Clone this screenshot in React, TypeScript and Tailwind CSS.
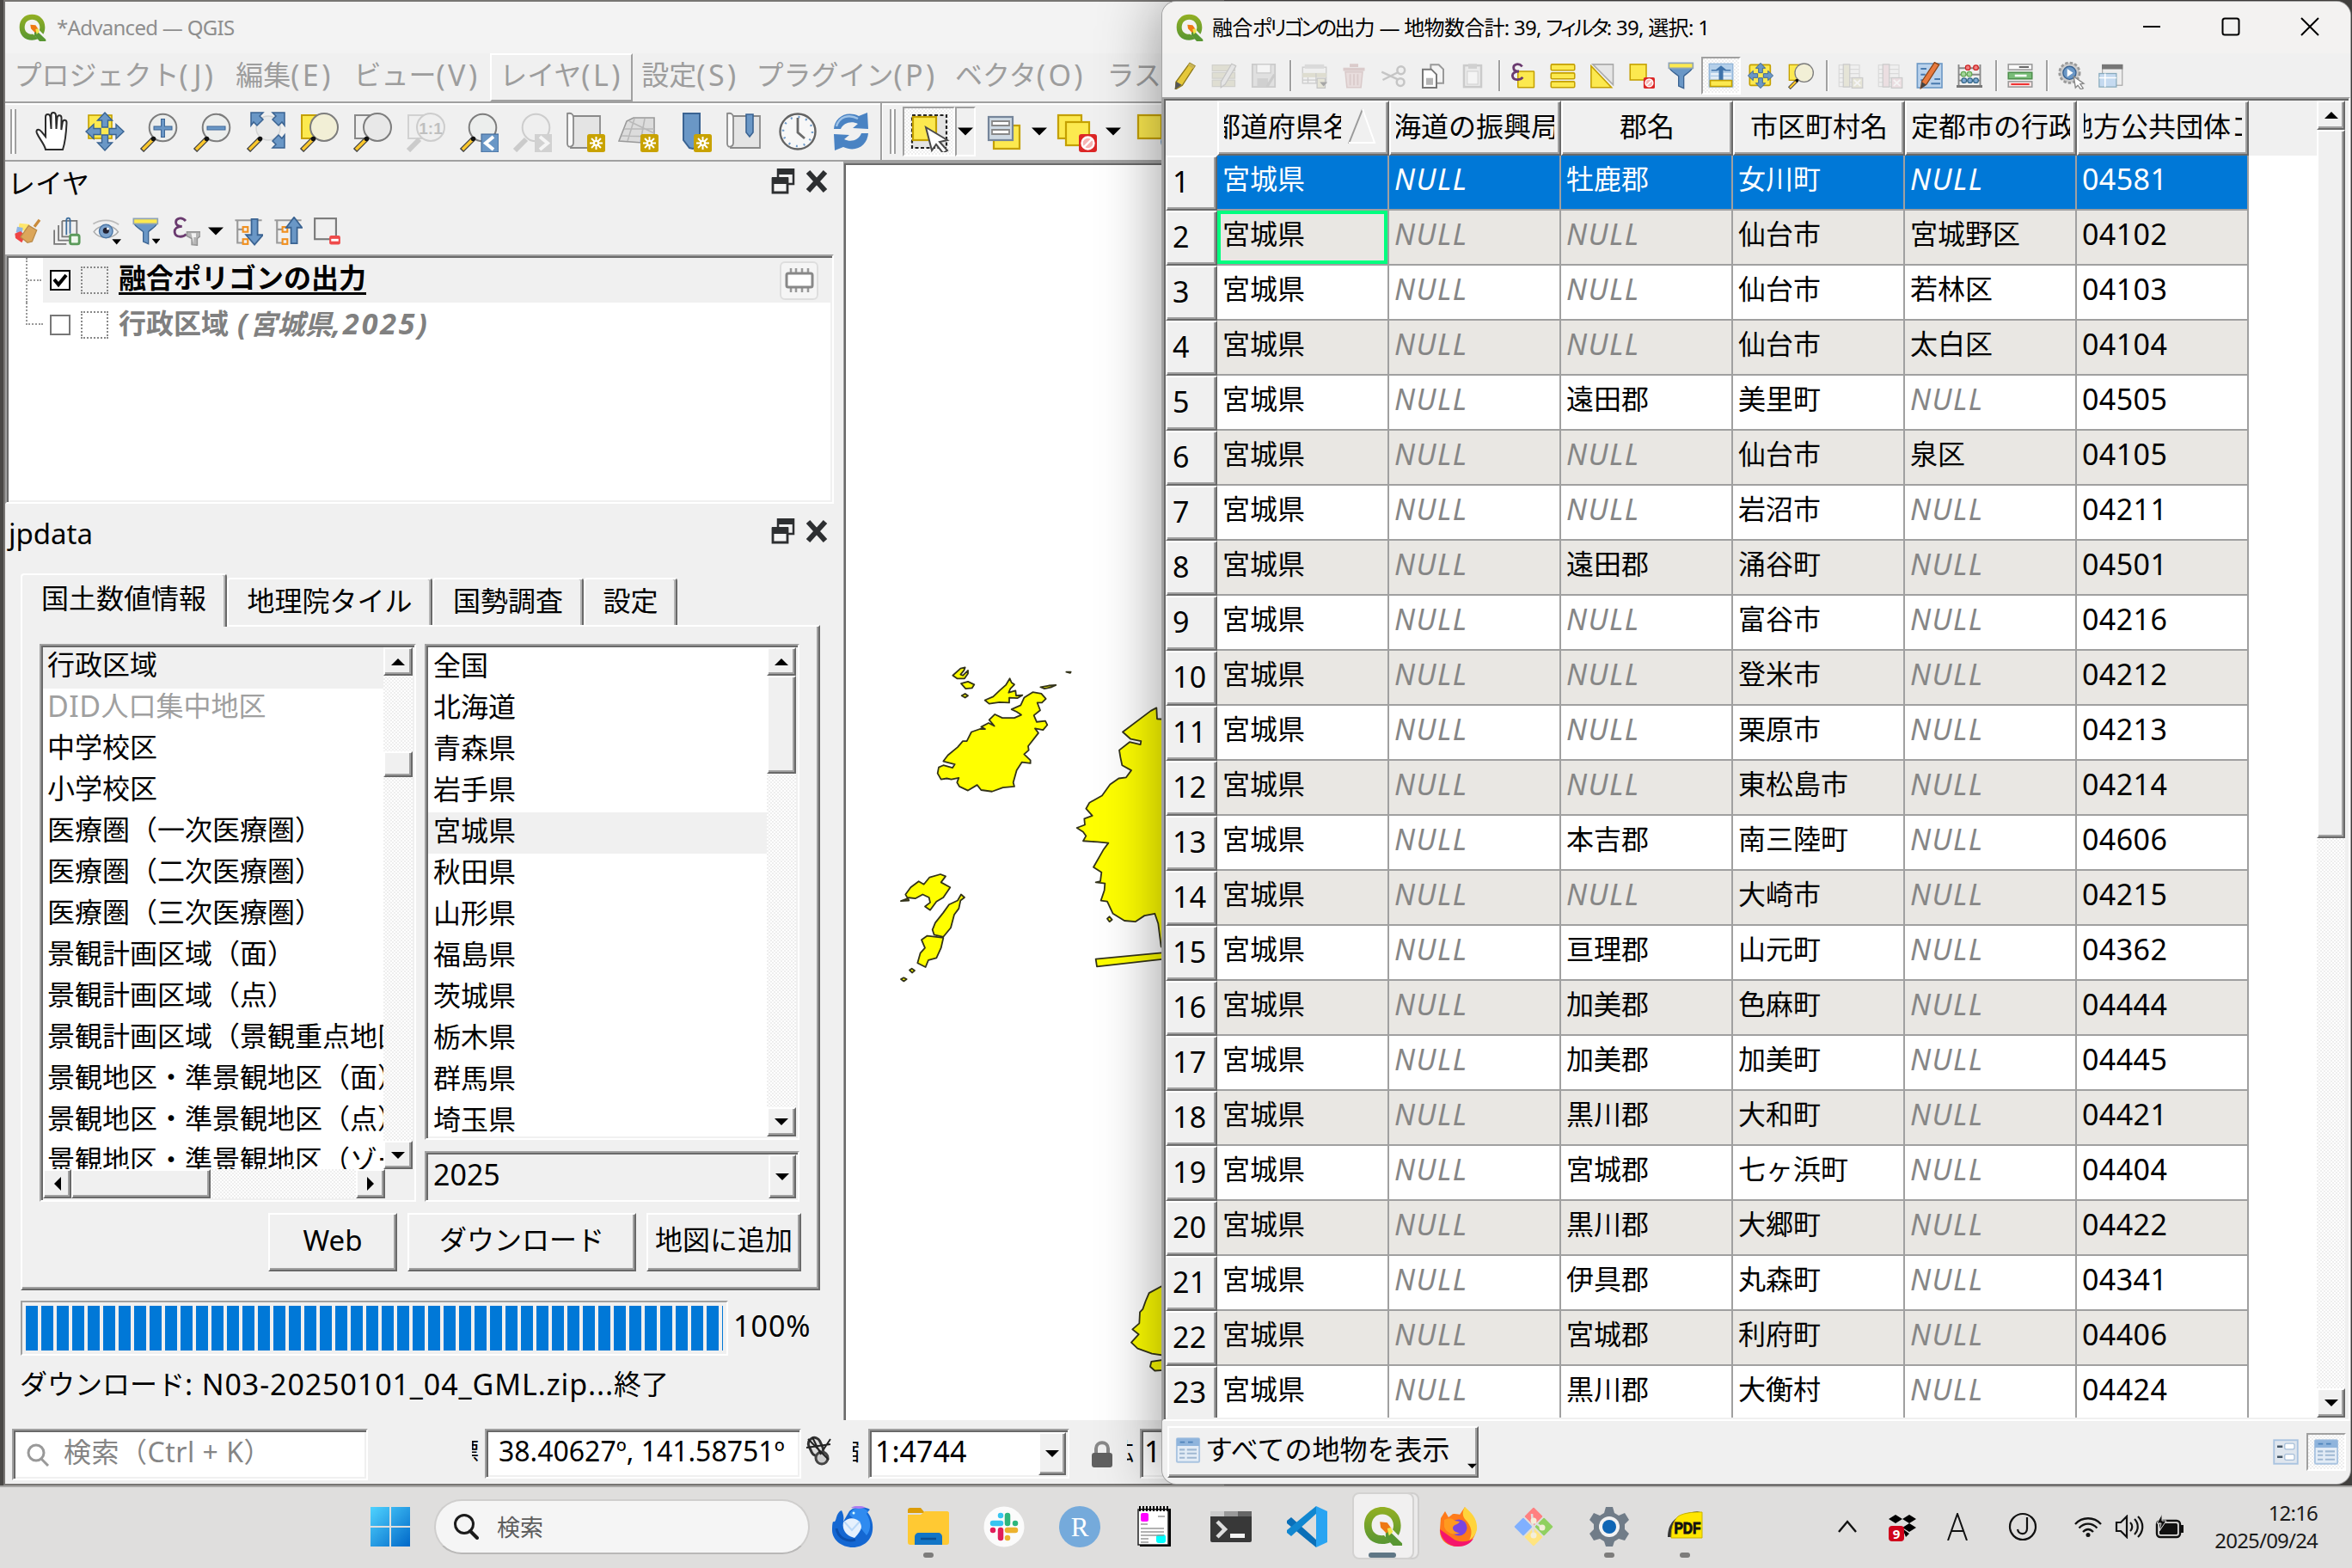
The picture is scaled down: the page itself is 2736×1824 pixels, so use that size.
import React from "react";

type Kids = { children?: React.ReactNode };

const RAISED =
  "border-2 border-t-white border-l-white border-r-[#696969] border-b-[#696969] bg-[#f0f0f0] shadow-[inset_-2px_-2px_0_#a0a0a0]";
const SUNKEN =
  "border-2 border-t-[#a0a0a0] border-l-[#a0a0a0] border-r-white border-b-white shadow-[inset_2px_2px_0_#696969,inset_-2px_-2px_0_#f0f0f0]";
const CHECKER =
  "bg-[repeating-conic-gradient(#ffffff_0_25%,#eeeeee_0_50%)] bg-[length:4px_4px]";

/* ---------- icon primitives ---------- */

function Icon({ size = 48, box = 48, className = "", children }: Kids & { size?: number; box?: number; className?: string }) {
  return (
    <svg width={size} height={size} viewBox={`0 0 ${box} ${box}`} fill="none" className={`shrink-0 ${className}`}>
      {children}
    </svg>
  );
}

const Handle = () => (
  <>
    <path d="M18 33L5 46" stroke="#444" strokeWidth="6" />
    <path d="M17 34L6 45" stroke="#fcc82c" strokeWidth="3.4" />
    <circle cx="18.5" cy="32.5" r="2.8" fill="#111" />
  </>
);
const Lens = ({ fill = "#eceeed" }: { fill?: string }) => (
  <circle cx="29.5" cy="19.5" r="15.8" fill={fill} stroke="#7d7d7d" strokeWidth="2" />
);
const Badge = () => (
  <>
    <rect x="27" y="27" width="21" height="21" rx="2.5" fill="#c8a200" />
    <path d="M37.5 30v15M30 37.5h15M32 32l11 11M43 32L32 43" stroke="#fff" strokeWidth="2" />
    <circle cx="37.5" cy="37.5" r="3.6" fill="#fff" />
    <circle cx="37.5" cy="37.5" r="1.4" fill="#c8a200" />
  </>
);
const NoBadge = () => (
  <>
    <rect x="27" y="27" width="21" height="21" rx="3" fill="#dc2626" />
    <circle cx="37.5" cy="37.5" r="7" fill="#f6b3b3" stroke="#fff" strokeWidth="2.4" />
    <path d="M33 42l9-9" stroke="#fff" strokeWidth="2.4" />
  </>
);
const Y = "#fce94f";
const YS = "#c4a000";
const B = "#6a97c6";
const BS = "#3a6392";

const PanArrows = () => (
  <g fill={B} stroke={BS} strokeWidth="1.4">
    <path d="M24 2l8.500 9h-5v8h-7v-8h-5z" />
    <path d="M24 46l8.500-9h-5v-9h-7v9h-5z" />
    <path d="M2 24l9-8.500v5h8v7h-8v5z" />
    <path d="M46 24l-9-8.500v5h-8v7h8v5z" />
  </g>
);

const HandIcon = () => (
  <Icon>
    <path
      d="M16 45c-1-6-7-12-10-19-2-4 2-6 5-2l5 6V7c0-4 5-4 5.500 0l1 14V5c0-4 5-4 5.500 0l.5 16 1-13c.5-4 5-3.500 5 0l-.2 14 1.500-9c.7-3.500 5-3 4.700 1-.5 11-1.500 22-4.500 31z"
      fill="#fff" stroke="#2b2b2b" strokeWidth="2" transform="translate(1 0)"
    />
  </Icon>
);
const PanSel = ({ size = 48 }: { size?: number }) => (
  <Icon size={size}>
    <rect x="5" y="5" width="27" height="27" fill={Y} stroke={YS} strokeWidth="1.600" />
    <PanArrows />
  </Icon>
);
const PanRows = () => (
  <Icon size={32}>
    <rect x="5" y="5" width="36" height="36" rx="2" fill={Y} stroke={YS} strokeWidth="2.500" />
    <PanArrows />
  </Icon>
);
const ZoomIn = () => (
  <Icon><Lens /><Handle /><path d="M29.500 9v22M18.500 20h22" stroke={BS} strokeWidth="5" /><path d="M29.500 10v20M19.500 20h20" stroke={B} strokeWidth="3.200" /></Icon>
);
const ZoomOut = () => (
  <Icon><Lens /><Handle /><path d="M18.500 20h22" stroke={BS} strokeWidth="5" /><path d="M19.500 20h20" stroke={B} strokeWidth="3.200" /></Icon>
);
const ZoomFull = () => (
  <Icon>
    <circle cx="28" cy="20" r="14" fill="#e9eaea" stroke="#d2d4d4" strokeWidth="1.500" />
    <g fill={B} stroke={BS} strokeWidth="1.500">
      <path d="M8 2h14l-4 4 4 4-7 7-4-4-3 4z" /><path d="M47 2H33l4 4-4 4 7 7 4-4 3 4z" /><path d="M47 43H33l4-4-4-4 7-7 4 4 3-4z" />
    </g>
    <Handle />
  </Icon>
);
const ZoomSel = ({ size = 48 }: { size?: number }) => (
  <Icon size={size}>
    <rect x="5" y="5" width="22" height="27" fill={Y} stroke={YS} strokeWidth="2" />
    <circle cx="31" cy="19" r="16" fill="#f2efd6" stroke="#7d7d7d" strokeWidth="2" /><Handle />
  </Icon>
);
const ZoomLayer = () => (
  <Icon><rect x="5" y="5" width="22" height="27" fill="#eee" stroke="#888" strokeWidth="2" /><circle cx="31" cy="19" r="16" fill="#e8e8e8" stroke="#7d7d7d" strokeWidth="2" /><Handle /></Icon>
);
const ZoomNative = () => (
  <Icon className="opacity-35">
    <rect x="5" y="5" width="22" height="27" fill="#eee" stroke="#999" strokeWidth="2" /><circle cx="31" cy="19" r="16" fill="#eee" stroke="#8d8d8d" strokeWidth="2" />
    <path d="M18 33L5 46" stroke="#888" strokeWidth="6" />
    <text x="31" y="27" textAnchor="middle" fontFamily="Liberation Sans" fontWeight="700" fontSize="19" fill="#666">1:1</text>
  </Icon>
);
const ZoomLast = () => (
  <Icon><Lens /><Handle /><rect x="28" y="27" width="20" height="21" fill={B} stroke={BS} /><path d="M42 30l-9 7.500 9 7.500" stroke="#fff" strokeWidth="4" /></Icon>
);
const ZoomNext = () => (
  <Icon className="opacity-35"><circle cx="29.500" cy="19.500" r="15.800" fill="#eee" stroke="#8d8d8d" strokeWidth="2" /><path d="M18 33L5 46" stroke="#888" strokeWidth="6" /><rect x="28" y="27" width="20" height="21" fill="#999" /><path d="M34 30l9 7.500-9 7.500" stroke="#fff" strokeWidth="4" /></Icon>
);
const MapSheet = ({ children }: Kids) => (
  <Icon>
    <path d="M10 6h32v37H8z" fill="#e4e4e4" stroke="#8a8a8a" strokeWidth="1.800" />
    <path d="M4 3c5-1 7 1 7 5v29c0 5-7 7-7 1z" fill="#fafafa" stroke="#8a8a8a" strokeWidth="1.800" />
    {children}
  </Icon>
);
const View3D = () => (
  <Icon>
    <path d="M11 12l8-4h24v30L2 35z" fill="#dcdcdc" stroke="#999" strokeWidth="1.600" />
    <path d="M8 21h35M5 29l38 1M20 9l-8 26M32 9l-5 27M14 12l29 14" stroke="#b9b9b9" strokeWidth="1.600" /><Badge />
  </Icon>
);
const Bookmark = () => (
  <Icon><path d="M15 3h19v38l-8 3-4-1-7-9z" fill={B} stroke={BS} strokeWidth="2" /><Badge /></Icon>
);
const ShowBookmark = () => (
  <MapSheet><path d="M26 4h8v21l-4 5-4-5z" fill={B} stroke={BS} strokeWidth="1.600" /></MapSheet>
);
const Clock = () => (
  <Icon>
    <circle cx="24" cy="24" r="20.500" fill="#f7f7f7" stroke="#636363" strokeWidth="2.400" />
    <circle cx="24" cy="24" r="17" stroke="#6f9ccc" strokeWidth="2.500" strokeDasharray="2 6.900" />
    <path d="M24 8v17l8 7" stroke="#6b6b6b" strokeWidth="2.800" />
  </Icon>
);
const Refresh = () => (
  <Icon>
    <path d="M4 21C5 8 18-1 33 6l10-4 1 19-18-1 6-5c-8-4-17-1-20 6z" fill="#4a83c3" />
    <path d="M44 26C43 40 30 49 15 42l-10 4-1-19 18 1-6 5c8 4 17 1 20-7z" fill="#4a83c3" />
    <path d="M7 18C10 7 21 3 32 9" stroke="#9fc3e8" strokeWidth="2.500" />
  </Icon>
);
const SelectIcon = () => (
  <Icon>
    <rect x="4" y="5" width="40" height="38" fill="#e4e4e4" stroke="#222" strokeWidth="2.200" strokeDasharray="4 2.500" />
    <rect x="5" y="7" width="27" height="27" fill={Y} stroke={YS} strokeWidth="2.200" />
    <path d="M20 19l25 15-9 2 9 10-5 3-8-10-5 7z" fill="#fff" stroke="#4a4a4a" strokeWidth="2" />
  </Icon>
);
const FormSel = () => (
  <Icon>
    <rect x="12" y="17" width="30" height="27" fill={Y} stroke={YS} strokeWidth="2.200" /><rect x="6" y="7" width="28" height="27" fill="#cdd8e2" stroke="#75859a" strokeWidth="2.200" />
    <path d="M10 12h20v5H10zM10 22h20v5H10z" fill="#fff" stroke="#888" strokeWidth="1.800" />
  </Icon>
);
const Deselect = () => (
  <Icon><rect x="3" y="5" width="27" height="27" fill={Y} stroke={YS} strokeWidth="2.200" /><rect x="12" y="13" width="27" height="27" fill={Y} stroke={YS} strokeWidth="2.200" /><NoBadge /></Icon>
);
const QLogo = ({ size }: { size: number }) => (
  <Icon size={size}>
    <defs><linearGradient id="qg" x1="0" y1="0" x2="0" y2="1"><stop offset="0" stopColor="#93b023" /><stop offset="1" stopColor="#589632" /></linearGradient></defs>
    <path d="M23 1C10 1 1 10 1 23.500S10 46 23 46c4 0 7-.8 10-2.200l-8-8.200c-9 1-15-4-15-12S15 10 23 10s13.500 6 13.500 13.500c0 2-.3 3.500-1 5l7 7c2-3.500 3-7.500 3-12C45.500 10 36 1 23 1z" fill="url(#qg)" />
    <path d="M27 26l20 19v3H36L27 38z" fill="#589632" />
    <path d="M20 19l9 1 5 7-6 6-7-7z" fill="#ee7913" />
    <path d="M29 27l4-1 3 5-5 5z" fill="#f0e64a" />
  </Icon>
);

/* ---------- small toolbar icons ---------- */

const Faded = ({ children }: Kids) => <Icon size={30} className="opacity-30">{children}</Icon>;
const Pencil = () => (
  <Icon size={32}><path d="M33 2l9 5-22 34-12 7 1-13z" fill="#e5c83a" stroke="#8f7a1a" strokeWidth="2" /><path d="M33 2l9 5-3 5-9-6z" fill="#c9b458" /><path d="M9 34l10 6-12 8z" fill="#555" /></Icon>
);
const EditAll = () => (
  <Faded><path d="M2 4h42v11H2zM2 18h42v11H2zM2 32h42v12H2z" fill="#bbb78f" stroke="#8b8b7b" strokeWidth="2" /><path d="M38 2l8 4-20 34-8 6V36z" fill="#ccc" stroke="#666" strokeWidth="2" /></Faded>
);
const Save = () => (
  <Faded><path d="M3 3h42v42H3z" fill="#bdbdbd" stroke="#777" strokeWidth="3" /><path d="M11 3h26v16H11z" fill="#fff" stroke="#777" strokeWidth="2" /><path d="M12 29h20v16H12z" fill="#888" /><path d="M44 22L30 45" stroke="#777" strokeWidth="5" /></Faded>
);
const AddRow = () => (
  <Faded><path d="M2 8h44v30H2z" fill="#eee" stroke="#777" strokeWidth="2" /><path d="M6 3h36v8H6z" fill="#aaa" /><path d="M2 19h44v8H2z" fill="#b8b48a" /><path d="M12 27v11M27 19v19M2 32h44" stroke="#777" strokeWidth="2" /><rect x="29" y="29" width="15" height="18" fill="#cfcba0" stroke="#666" strokeWidth="2" /><path d="M34 36h14l-7 8z" fill="#000" /></Faded>
);
const Trash = () => (
  <Faded><path d="M4 12h40M16 5h16" stroke="#a77" strokeWidth="6" /><path d="M8 17h32l-3 29H11z" fill="#d9b3b3" stroke="#a77" strokeWidth="2.500" /><path d="M17 21v21M24 21v21M31 21v21" stroke="#a77" strokeWidth="3" /></Faded>
);
const Cut = () => (
  <Faded><circle cx="38" cy="14" r="7" stroke="#666" strokeWidth="4" /><circle cx="37" cy="36" r="7" stroke="#666" strokeWidth="4" /><path d="M2 17l30 14M4 32l28-14" stroke="#666" strokeWidth="4" /></Faded>
);
const Copy = () => (
  <Icon size={32}><path d="M20 5h14l8 8v24H20z" fill="#f4f4f4" stroke="#999" strokeWidth="3" /><path d="M6 13h15l9 9v23H6z" fill="#fff" stroke="#777" strokeWidth="3" /><path d="M12 28h12v12H12z" fill="#b5b5b5" /></Icon>
);
const Paste = () => (
  <Faded><rect x="8" y="5" width="32" height="40" fill="#ddd" stroke="#777" strokeWidth="4" /><rect x="14" y="16" width="20" height="24" fill="#fff" stroke="#999" strokeWidth="2" /><rect x="16" y="2" width="16" height="9" fill="#888" /></Faded>
);
const SelExpr = () => (
  <Icon size={30}><rect x="14" y="16" width="30" height="30" rx="1" fill={Y} stroke={YS} strokeWidth="2.500" /><path d="M22 7C16 0 5 2 6 10c0 5 5 6 10 6C8 16 3 20 4 25c1 8 14 8 19 2" stroke="#6a3a6f" strokeWidth="4.500" /></Icon>
);
const SelAll = () => (
  <Icon size={30}><g fill={Y} stroke={YS} strokeWidth="2.500"><rect x="2" y="3" width="44" height="11" rx="2" /><rect x="2" y="19" width="44" height="11" rx="2" /><rect x="2" y="35" width="44" height="11" rx="2" /></g></Icon>
);
const Invert = () => (
  <Icon size={30}><path d="M6 3h38v38z" fill="#e6e6e6" stroke="#aaa" strokeWidth="2.500" /><path d="M3 6v40h38z" fill={Y} stroke={YS} strokeWidth="2.500" /></Icon>
);
const DeselSmall = () => (
  <Icon size={30}><rect x="2" y="3" width="30" height="29" fill={Y} stroke={YS} strokeWidth="2.500" /><NoBadge /></Icon>
);
const Funnel = ({ drop }: { drop?: boolean }) => (
  <Icon size={32}>
    <path d="M3 10h40c-2 7-12 11-15 15v21l-9-4V25C16 21 5 17 3 10z" fill={B} stroke={BS} strokeWidth="2" />
    <path d="M2 2h42v9H2z" fill={Y} stroke="#8fa3b5" strokeWidth="2.500" />
    {drop && <path d="M34 37h15l-7.500 9z" fill="#000" />}
  </Icon>
);
const MoveTop = () => (
  <Icon size={30}><rect x="2" y="2" width="44" height="43" fill="#b4cfe9" stroke="#8db2d8" strokeWidth="2" /><path d="M5 21h38M5 28h38" stroke="#e8f0f8" strokeWidth="4" /><path d="M6 14h12M30 14h12" stroke="#4879ad" strokeWidth="2.500" /><path d="M24 5l11 9h-7v18h-8V14h-7z" fill="#3f73ab" /><rect x="4" y="33" width="40" height="11" fill={Y} stroke={YS} strokeWidth="2.500" /></Icon>
);
const NewCol = ({ color }: { color: string }) => (
  <Faded><path d="M2 4h38v40H2zM2 12h38M2 20h38M2 28h38M2 36h38" fill="#eee" stroke="#aaa" strokeWidth="2" /><rect x="10" y="3" width="12" height="42" fill={color} stroke="#777" strokeWidth="2" /><rect x="26" y="28" width="20" height="19" fill={color} stroke="#777" strokeWidth="2" /><path d="M30 32l12 11M42 32L30 43" stroke="#fff" strokeWidth="3" /></Faded>
);
const OrganizeCols = () => (
  <Icon size={32}><rect x="2" y="3" width="43" height="42" fill="#b9d2ec" stroke="#6f9ac6" strokeWidth="2.500" /><path d="M8 12h10M8 22h8M8 32h6M26 38h16M32 30h10" stroke="#4879ad" strokeWidth="3" /><path d="M32 1l8 4-22 34-10 7 2-12z" fill="#e87a3e" stroke="#8c4518" strokeWidth="2" /><path d="M10 35l8 5-10 6z" fill="#444" /></Icon>
);
const Abacus = () => (
  <Icon size={30}><path d="M4 3v40M44 3v40M4 10h40M4 22h40M4 33h40" stroke="#888" strokeWidth="3" /><path d="M0 44h48" stroke="#777" strokeWidth="5" /><g strokeWidth="2"><g fill="#f08080" stroke="#c22"><circle cx="21" cy="9" r="4.500" /><circle cx="36" cy="9" r="4.500" /></g><g fill="#a5d69b" stroke="#6a5"><circle cx="13" cy="21" r="4.500" /><circle cx="24" cy="21" r="4.500" /></g><g fill="#7fa8d2" stroke="#368"><circle cx="14" cy="33" r="4.500" /><circle cx="25" cy="33" r="4.500" /><circle cx="36" cy="33" r="4.500" /></g></g></Icon>
);
const CondFormat = () => (
  <Icon size={30}><g strokeWidth="2.500"><rect x="2" y="3" width="44" height="10" fill="#fafafa" stroke="#999" /><rect x="2" y="18" width="44" height="12" fill="#79bd78" stroke="#4f8f4e" /><rect x="2" y="35" width="44" height="10" fill="#fde3e3" stroke="#999" /></g><path d="M22 8h18" stroke="#666" strokeWidth="3" /><path d="M14 24h22" stroke="#fff" strokeWidth="4" /><path d="M7 40h34" stroke="#e33" strokeWidth="3" /></Icon>
);
const ActionIcon = () => (
  <Icon size={33}><circle cx="21" cy="20" r="17" fill="#ccc" stroke="#999" strokeWidth="4" strokeDasharray="5 3" /><circle cx="21" cy="20" r="11" fill={B} stroke={BS} strokeWidth="2" /><path d="M17 13l10 7-10 7z" fill="#fff" /><path d="M28 26l17 12-6 1 5 7-4 2-5-7-4 4z" fill="#fff" stroke="#888" strokeWidth="2" /></Icon>
);
const DockTable = () => (
  <Icon size={30}><rect x="9" y="4" width="37" height="38" fill="#eee" stroke="#aaa" strokeWidth="2" /><rect x="8" y="3" width="39" height="9" fill="#777" /><rect x="3" y="20" width="32" height="25" fill="#c5daf0" stroke="#8ab" strokeWidth="2" /><path d="M3 28h32M14 20v25" stroke="#fff" strokeWidth="2.500" /></Icon>
);
const TableIcon = ({ size = 30 }: { size?: number }) => (
  <Icon size={size}><rect x="3" y="2" width="42" height="44" rx="2" fill="#e3ecf6" stroke="#a9c3e0" strokeWidth="3" /><rect x="3" y="2" width="42" height="14" fill="#8fb4dc" /><path d="M9 9h9M24 9h9" stroke="#4f84bb" strokeWidth="3" /><path d="M8 23h10M22 23h18M8 30h10M22 30h18M8 38h10M22 38h18" stroke="#a0b8d2" strokeWidth="3.500" /></Icon>
);
const FormIcon = () => (
  <Icon size={30}><rect x="2" y="2" width="44" height="44" fill="#dfe6ee" stroke="#a9c3e0" strokeWidth="3" /><path d="M8 14h10M8 33h10" stroke="#456" strokeWidth="4" /><rect x="22" y="8" width="18" height="11" rx="3" fill="#fff" stroke="#a5bdd8" strokeWidth="2" /><rect x="22" y="28" width="18" height="11" rx="3" fill="#fff" stroke="#a5bdd8" strokeWidth="2" /></Icon>
);

/* ---------- layer panel icons ---------- */

const Style = () => (
  <Icon size={32}><path d="M10 10l18 2-8 12L8 20z" fill="#ffe66b" /><path d="M6 16l10 2-2 12-10-4z" fill="#8fb4e4" /><path d="M2 28l10-4 8 8-6 12L3 36z" fill="#ef4444" /><path d="M45 4L36 16" stroke="#c98a3a" strokeWidth="5" /><path d="M26 14l14 8-8 20-8 2L12 34z" fill="#dca65a" stroke="#b98a4a" strokeWidth="2" /></Icon>
);
const AddGroup = () => (
  <Icon size={34}><path d="M3 22v23h20M10 14v25h18M16 7h24v22" stroke="#777" strokeWidth="2.500" /><path d="M16 7v26h14" stroke="#777" strokeWidth="2.500" /><path d="M23 30V6c0-5 6-5 6 0v22" stroke="#3f6f9d" strokeWidth="2.500" /><rect x="29" y="30" width="15" height="15" rx="3" fill="#eef7ed" stroke="#5a9a5a" strokeWidth="4" /></Icon>
);
const EyeIcon = () => (
  <Icon size={34}><path d="M3 25C11 13 33 11 43 25 34 37 12 38 3 25z" fill="#f1f3f5" stroke="#aaa" strokeWidth="2" /><circle cx="23" cy="24" r="11" fill="#7fa5cf" stroke="#4c77a6" strokeWidth="2" /><circle cx="23" cy="23" r="5" fill="#223" /><circle cx="26" cy="20" r="2" fill="#fff" /><path d="M2 12C14 4 32 4 44 13" stroke="#bbb" strokeWidth="2.500" /><path d="M33 37h15l-7.500 9z" fill="#000" /></Icon>
);
const ExprFilter = () => (
  <Icon size={34}><path d="M24 7C18 0 7 2 8 10c0 5 5 6 10 6C10 16 5 20 6 26c1 9 14 8 19 3" stroke="#6a3a6f" strokeWidth="4" /><path d="M26 25h22v7l-5 4v11l-9-1V36l-8-4z" fill="#b5b5b5" stroke="#929292" strokeWidth="2" /><path d="M33 27h8v7h-4v10" fill="#f2f2f2" /></Icon>
);
const TreeArrow = ({ up }: { up?: boolean }) => (
  <Icon size={34}><path d="M2 6h44M6 6v37h9M6 21h9" stroke="#999" strokeWidth="3" /><rect x="15" y="17" width="8" height="8" stroke="#f09020" strokeWidth="3" /><rect x="15" y="37" width="8" height="8" stroke="#f09020" strokeWidth="3" /><path d={up ? "M34 1l13 17h-8v26H29V18h-8z" : "M34 46l14-16h-9V4H29v26H20z"} fill={B} stroke={BS} strokeWidth="2.500" /></Icon>
);
const RemoveLayer = () => (
  <Icon size={34}><rect x="3" y="3" width="35" height="34" stroke="#7a7a7a" strokeWidth="3" /><rect x="27" y="31" width="18" height="15" rx="3" fill="#ef4a4a" /><path d="M30 38.500h12" stroke="#fff" strokeWidth="4" /></Icon>
);

const Tri = ({ dir = "down", className = "" }: { dir?: "up" | "down" | "left" | "right"; className?: string }) => {
  const d = { down: "M0 4h16L8 12z", up: "M0 12h16L8 4z", left: "M12 0v16L4 8z", right: "M4 0v16l8-8z" }[dir];
  return <svg viewBox="0 0 16 16" className={`shrink-0 ${className}`}><path d={d} fill="#000" /></svg>;
};

const SbBtn = ({ dir, className }: { dir: "up" | "down" | "left" | "right"; className: string }) => (
  <div className={`${RAISED} flex shrink-0 items-center justify-center ${className}`}><Tri dir={dir} className="h-4 w-4" /></div>
);

const DockButtons = () => (
  <div className="flex items-center gap-3 pr-[18px] pb-1">
    <svg width="28" height="30" viewBox="0 0 28 30" fill="none"><path d="M8 1h18v17H8z" stroke="#2d2f31" strokeWidth="2.500" fill="#f0f0f0" /><path d="M7 0h20v7H7z" fill="#2d2f31" /><path d="M2 12h17v16H2z" stroke="#2d2f31" strokeWidth="2.800" fill="#f4f4f4" /><path d="M1 10h19v8H1z" fill="#2d2f31" /></svg>
    <svg width="26" height="28" viewBox="0 0 26 28"><path d="M3 3l20 22M23 3L3 25" stroke="#2d2f31" strokeWidth="6" /></svg>
  </div>
);

/* ---------- main window ---------- */

const menus: [string, string, boolean?][] = [
  ["プロジェクト(J)", "w-[256px]"], ["編集(E)", "w-[138px]"], ["ビュー(V)", "w-[170px]"], ["レイヤ(L)", "w-[166px]", true],
  ["設定(S)", "w-[134px]"], ["プラグイン(P)", "w-[230px]"], ["ベクタ(O)", "w-[174px]"], ["ラスタ(R)", "w-[174px]"],
];

function MenuBar() {
  return (
    <div className="flex h-14 shrink-0 bg-[#f0f0f0] text-[#9d9d9d]">
      {menus.map(([m, w, on]) => (
        <div key={m} className={`${w} flex shrink-0 items-center justify-center border-2 pb-1.5 ${on ? "border-t-white border-l-white border-r-[#a0a0a0] border-b-[#a0a0a0]" : "border-transparent"}`}>
          <span>{m.slice(0, -3)}</span><span className="text-[34px] tracking-[3.4px]">{m.slice(-3)}</span>
        </div>
      ))}
    </div>
  );
}

const Cell = ({ children, w = "w-[62px]" }: Kids & { w?: string }) => (
  <div className={`${w} flex h-full shrink-0 items-center justify-center`}>{children}</div>
);
const Grip = () => <div className="h-[52px] w-[7px] shrink-0 border-x-2 border-[#a0a0a0] bg-white" />;

function MainToolbar() {
  return (
    <div className="flex h-[68px] shrink-0 items-center border-t-2 border-t-[#a0a0a0] bg-[#f0f0f0] pl-1.5 shadow-[inset_0_2px_0_#fff]">
      <Grip />
      <div className="flex h-full items-center pl-[10px]">
        {[HandIcon, PanSel, ZoomIn, ZoomOut, ZoomFull, ZoomSel, ZoomLayer, ZoomNative, ZoomLast, ZoomNext].map((I, i) => (
          <Cell key={i}><I /></Cell>
        ))}
        <Cell><MapSheet><Badge /></MapSheet></Cell>
        <Cell><View3D /></Cell><Cell><Bookmark /></Cell><Cell><ShowBookmark /></Cell><Cell><Clock /></Cell><Cell><Refresh /></Cell>
      </div>
      <div className="ml-[3px] h-full w-[3px] border-l-2 border-[#a0a0a0] bg-white" />
      <div className="w-2" />
      <Grip />
      <div className={`ml-2 flex h-[58px] w-[61px] shrink-0 items-center justify-center border-2 border-t-[#a0a0a0] border-l-[#a0a0a0] border-r-white border-b-white ${CHECKER}`}><SelectIcon /></div>
      <div className="flex h-[58px] w-[24px] shrink-0 items-center justify-center border-2 border-t-[#a0a0a0] border-l-[#a0a0a0] border-r-white border-b-white"><Tri className="h-[18px] w-[18px]" /></div>
      <Cell w="w-[65px]"><FormSel /></Cell><Tri className="h-[18px] w-[18px]" />
      <Cell w="w-[68px]"><Deselect /></Cell><Tri className="h-[18px] w-[18px]" />
      <Cell w="w-[68px]"><Icon><rect x="10" y="5" width="27" height="27" fill={Y} stroke={YS} strokeWidth="2.200" /><circle cx="44" cy="36" r="8" fill={B} /></Icon></Cell>
    </div>
  );
}

function LayerTree() {
  return (
    <div className={`${SUNKEN} mr-[11px] h-[290px] shrink-0 bg-white p-0.5`}>
      <div className="flex h-[52px] items-center">
        <div className="h-full w-[40px] pl-[20px]"><div className="flex h-full items-center border-l-2 border-dotted border-[#999]"><div className="w-4 border-t-2 border-dotted border-[#999]" /></div></div>
        <div className="flex h-full flex-1 items-center bg-[#f0f0f0] pl-2 pr-[14px]">
          <div className="flex h-6 w-6 items-center justify-center border-2 border-black bg-white"><svg width="18" height="18" viewBox="0 0 18 18"><path d="M2 8l5 6 9-11" stroke="#000" strokeWidth="4" fill="none" /></svg></div>
          <div className="ml-3 h-8 w-8 border-2 border-dotted border-[#888]" />
          <span className="ml-[12px] -mt-1 border-b-[3px] border-black pb-0 text-[32px] leading-[34px] font-bold">融合ポリゴンの出力</span>
          <div className="ml-auto flex h-[45px] w-[45px] items-center justify-center rounded-md border-2 border-[#dedede] bg-[#f5f5f5]">
            <svg width="34" height="30" viewBox="0 0 34 30" fill="none"><path d="M7 1v6M13 1v6M20 1v6M27 1v6M7 23v6M13 23v6M20 23v6M27 23v6" stroke="#999" strokeWidth="2.500" /><rect x="2" y="7" width="30" height="16" rx="2" fill="#fff" stroke="#888" strokeWidth="3" /></svg>
          </div>
        </div>
      </div>
      <div className="flex h-[52px] items-center">
        <div className="h-full w-[40px] pl-[20px]"><div className="h-[26px] border-b-2 border-l-2 border-dotted border-[#999]" /></div>
        <div className="ml-2 h-6 w-6 border-2 border-[#777] bg-white" />
        <div className="ml-3 h-8 w-8 border-2 border-dotted border-[#888]" />
        <span className="ml-[12px] pb-1 font-bold text-[#808080]">行政区域</span>
        <span className="ml-[10px] pb-1 font-bold text-[#808080] italic"><span className="text-[34px] tracking-[3px]">(</span>宮城県<span className="text-[34px] tracking-[2.8px]">,2025)</span></span>
      </div>
    </div>
  );
}

const datasets = ["行政区域", "DID人口集中地区", "中学校区", "小学校区", "医療圏（一次医療圏）", "医療圏（二次医療圏）", "医療圏（三次医療圏）", "景観計画区域（面）", "景観計画区域（点）", "景観計画区域（景観重点地区）", "景観地区・準景観地区（面）", "景観地区・準景観地区（点）", "景観地区・準景観地区（ゾーン）"];
const prefs = ["全国", "北海道", "青森県", "岩手県", "宮城県", "秋田県", "山形県", "福島県", "茨城県", "栃木県", "群馬県", "埼玉県"];

function DatasetList() {
  return (
    <div className={`${SUNKEN} flex h-[649px] w-[438px] flex-col bg-white p-0.5`}>
      <div className="flex min-h-0 flex-1">
        <div className="w-[398px] overflow-hidden">
          {datasets.map((d, i) => (
            <div key={d} className={`flex h-12 items-center whitespace-nowrap pb-2 pl-[5px] ${i === 0 ? "bg-[#f0f0f0]" : ""} ${i === 1 ? "text-[#a0a0a0]" : ""}`}>
              {i === 1 ? <><span className="text-[34px] tracking-[0.4px]">DID</span>{d.slice(3)}</> : d}
            </div>
          ))}
        </div>
        <div className={`flex w-[34px] flex-col ${CHECKER}`}>
          <SbBtn dir="up" className="h-[33px]" />
          <div className={`${RAISED} mt-[88px] h-[30px]`} />
          <SbBtn dir="down" className="mt-auto h-[33px]" />
        </div>
      </div>
      <div className="flex h-[34px] bg-[#f0f0f0]">
        <div className={`flex w-[398px] ${CHECKER}`}>
          <SbBtn dir="left" className="w-[33px]" />
          <div className={`${RAISED} w-[162px]`} />
          <SbBtn dir="right" className="ml-auto w-[34px]" />
        </div>
      </div>
    </div>
  );
}

function PrefColumn() {
  return (
    <div className="flex w-[436px] flex-col">
      <div className={`${SUNKEN} flex h-[577px] bg-white p-0.5`}>
        <div className="flex-1 overflow-hidden">
          {prefs.map((p, i) => (
            <div key={p} className={`flex h-12 items-center pb-1.5 pl-[6px] ${i === 4 ? "bg-[#f0f0f0]" : ""}`}>{p}</div>
          ))}
        </div>
        <div className={`flex w-[34px] flex-col ${CHECKER}`}>
          <SbBtn dir="up" className="h-[33px]" />
          <div className={`${RAISED} h-[114px]`} />
          <SbBtn dir="down" className="mt-auto h-[34px]" />
        </div>
      </div>
      <div className={`${SUNKEN} mt-[13px] flex h-[59px] items-center bg-[#f0f0f0] p-0.5 pl-[8px]`}>
        <span className="flex-1 pb-1.5 text-[34px]">2025</span>
        <SbBtn dir="down" className="h-full w-[32px]" />
      </div>
    </div>
  );
}

const Tab = ({ w, on, children }: Kids & { w: string; on?: boolean }) => (
  <div className={`${w} flex items-center justify-center rounded-t-[4px] border-t-2 border-r-2 border-l-2 border-t-white border-r-[#696969] border-l-white bg-[#f0f0f0] ${on ? "relative -mb-0.5 h-[62px] pb-1.5" : "h-[55px] pb-1"} shadow-[inset_-2px_0_0_#b4b4b4]`}>{children}</div>
);

function DataPanel() {
  return (
    <>
      <div className="flex h-[70px] shrink-0 items-center justify-between pb-0.5 pl-1"><span className="text-[33px]">jpdata</span><DockButtons /></div>
      <div className="flex h-[71px] shrink-0 items-end pl-[18px]">
        <Tab w="w-[240px]" on>国土数値情報</Tab><Tab w="w-[239px]">地理院タイル</Tab><Tab w="w-[176px]">国勢調査</Tab><Tab w="w-[109px]">設定</Tab>
      </div>
      <div className="ml-[18px] h-[774px] w-[930px] shrink-0 border-2 border-t-white border-r-[#696969] border-b-[#696969] border-l-white pt-5 pl-[20px] shadow-[inset_-2px_-2px_0_#a0a0a0]">
        <div className="flex gap-[10px]"><DatasetList /><PrefColumn /></div>
        <div className="mt-[13px] flex h-[68px] justify-end gap-3 pr-[20px]">
          <div className={`${RAISED} flex w-[150px] items-center justify-center pb-1.5 text-[33px]`}>Web</div>
          <div className={`${RAISED} flex w-[266px] items-center justify-center pb-1.5`}>ダウンロード</div>
          <div className={`${RAISED} flex w-[180px] items-center justify-center pb-1.5`}>地図に追加</div>
        </div>
      </div>
      <div className="mt-3 ml-[18px] flex h-[64px] shrink-0 items-center">
        <div className="h-full w-[823px] border-2 border-t-[#a0a0a0] border-r-white border-b-white border-l-[#a0a0a0] p-1 py-[4px]">
          <div className="h-full w-full bg-[repeating-linear-gradient(90deg,#0078d7_0_14px,#f0f0f0_14px_18px)]" />
        </div>
        <span className="ml-[6px] pb-1.5 text-[34px] tracking-[1px]">100%</span>
      </div>
      <div className="flex h-[68px] shrink-0 items-center pb-0.5 pl-[17px] whitespace-nowrap">ダウンロード<span className="text-[34px] tracking-[0.9px]">: N03-20250101_04_GML.zip...</span>終了</div>
    </>
  );
}

function MapCanvas() {
  return (
    <div className="flex-1 border-t-2 border-l-2 border-[#696969] bg-white">
      <svg width="370" height="1460" viewBox="0 0 370 1460">
        <g transform="translate(-4 548) scale(0.33333 0.58687)" fill="#ffff00" stroke="#33331a" strokeWidth="1.800" strokeLinejoin="round">
          {[
            "M385 78L412 64 428 62 424 68 412 76 420 78 438 68 438 74 426 84 400 84z",
            "M414 94L438 90 460 96 452 103 430 104z", "M416 118L428 114 438 118 428 122z",
            "M497 127L526 120 548 108 570 97 584 84 590 92 600 96 586 104 580 112 604 108 606 118 628 117 610 123 582 122 582 132 548 131 512 134z",
            "M691 101L720 98 745 97 730 101 705 104z", "M781 71L797 71 795 73z",
            "M590 145L622 137 634 122 664 111 694 114 710 124 696 132 680 132 690 147 668 157 678 170 708 168 715 176 700 186 672 183 684 192 648 218 650 226 634 234 656 246 656 252 626 250 608 266 596 290 600 298 560 300 522 308 484 305 470 295 438 306 408 298 400 290 406 281 380 284 364 282 344 284 332 272 336 260 352 256 384 261 392 254 352 248 368 236 402 220 420 208 434 208 450 190 480 184 498 184 484 180 510 172 530 178 512 166 532 155 558 162 600 162 624 156 608 150z",
            "M204 525L228 520 220 512 238 498 266 486 284 492 304 478 342 472 360 476 344 488 376 498 352 518 328 526 306 543 288 536 306 528 302 518 280 512 254 520 226 518 232 524z",
            "M314 582L324 568 352 548 372 532 402 524 414 512 426 518 412 524 406 540 390 552 378 578 352 596 320 592z",
            "M276 602L296 594 352 598 344 618 328 638 300 642 290 656 262 648 272 628 288 618z",
            "M234 662L242 659 252 663 243 667z", "M204 680L214 677 224 680 214 684z",
            "M1125 165L1098 164 1096 142 1076 148 978 190 1006 204 1042 208 1040 215 1002 210 966 226 970 240 976 256 1008 266 990 280 964 282 934 294 906 316 862 330 850 342 872 356 844 362 846 374 818 380 840 388 850 396 840 406 890 408 928 410 910 424 876 458 904 468 900 486 884 488 916 490 914 504 902 524 924 526 944 550 984 564 1022 566 1054 554 1090 550 1102 570 1112 615 1125 625z",
            "M884 640L1125 627 1125 640 888 655z", "M924 560L932 556 941 562 932 566z",
            "M1125 1285L1070 1302 1058 1318 1048 1334 1038 1340 1036 1362 1012 1374 1034 1384 1008 1400 1030 1412 1080 1422 1125 1426z",
            "M1125 1434L1078 1438 1074 1448 1090 1456 1125 1455z",
          ].map((d) => <path key={d} d={d} vectorEffect="non-scaling-stroke" />)}
        </g>
      </svg>
    </div>
  );
}

const Clipped = ({ children, className }: Kids & { className: string }) => (
  <div className={`flex h-14 w-[10px] shrink-0 items-center overflow-hidden pb-1 text-[28px] ${className}`}><span className="-ml-5">{children}</span></div>
);

function StatusBar() {
  return (
    <div className="flex h-[74px] shrink-0 items-start bg-[#f0f0f0] pt-[10px] pl-2">
      <div className={`${SUNKEN} flex h-[60px] w-[414px] items-center bg-white pl-[14px] text-[#858585]`}>
        <svg width="28" height="28" viewBox="0 0 28 28" fill="none" stroke="#999" strokeWidth="3"><circle cx="12" cy="12" r="9" /><path d="M18 19l8 8" /></svg>
        <span className="ml-4 pb-1.5 tracking-[0.5px]">検索（Ctrl + K）</span>
      </div>
      <Clipped className="ml-[121px]">標</Clipped>
      <div className={`${SUNKEN} ml-[5px] flex h-[58px] w-[368px] shrink-0 items-center bg-white pb-1.5 pl-[14px] text-[32px] whitespace-nowrap`}>38.40627º, 141.58751º</div>
      <svg width="34" height="36" viewBox="0 0 34 36" fill="none" className="mt-2 ml-1 shrink-0"><rect x="6" y="2" width="14" height="22" rx="7" stroke="#333" strokeWidth="3" transform="rotate(-25 13 13)" fill="#ddd" /><circle cx="20" cy="26" r="7" stroke="#444" strokeWidth="3" fill="#ccc" /><path d="M2 14l28-4M4 4l24 24M30 4l-8 12M9 2l10 20" stroke="#222" strokeWidth="2" /></svg>
      <Clipped className="ml-[22px]">縮</Clipped>
      <div className={`${SUNKEN} ml-[8px] flex h-[58px] w-[234px] shrink-0 items-center bg-white p-0.5 pl-[6px]`}><span className="flex-1 pb-1.5 text-[34px]">1:4744</span><SbBtn dir="down" className="h-full w-[32px]" /></div>
      <svg width="26" height="32" viewBox="0 0 26 32" fill="none" className="mt-[14px] ml-[25px] shrink-0"><path d="M6 16V9c0-9 14-9 14 0v7" stroke="#888" strokeWidth="4" /><rect x="1" y="14" width="24" height="17" rx="3" fill="#606060" /></svg>
      <Clipped className="ml-[16px]">拡</Clipped>
      <div className={`${SUNKEN} ml-[5px] flex h-[58px] w-[80px] shrink-0 items-center bg-white pb-1.5 pl-[3px] text-[34px]`}>100%</div>
    </div>
  );
}

function MainWindow() {
  return (
    <div className="absolute top-0 left-1 flex h-[1728px] w-[1420px] flex-col border-t-2 border-b-2 border-l-2 border-[#777573] bg-[#f0f0f0]">
      <div className="flex h-[60px] shrink-0 items-center bg-[#f3f3f3] pl-4">
        <QLogo size={32} /><span className="ml-3 text-[24px] tracking-[-0.7px] text-[#8e8e8e]">*Advanced — QGIS</span>
      </div>
      <MenuBar />
      <MainToolbar />
      <div className="flex min-h-0 flex-1">
        <div className="flex w-[975px] shrink-0 flex-col border-t-2 border-[#a0a0a0]">
          <div className="flex h-[50px] shrink-0 items-center justify-between pl-[3px]"><span>レイヤ</span><DockButtons /></div>
          <div className="flex h-[58px] shrink-0 items-center pt-1 pl-[3px]">
            {[Style, AddGroup, EyeIcon].map((I, i) => <Cell key={i} w="w-[46px]"><I /></Cell>)}
            <Cell w="w-[46px]"><Funnel drop /></Cell>
            <Cell w="w-[46px]"><ExprFilter /></Cell>
            <Tri className="mr-[6px] ml-[3px] h-[18px] w-[18px]" />
            <Cell w="w-[46px]"><TreeArrow /></Cell><Cell w="w-[46px]"><TreeArrow up /></Cell><Cell w="w-[46px]"><RemoveLayer /></Cell>
          </div>
          <LayerTree />
          <DataPanel />
        </div>
        <div className="flex flex-1 bg-[#a0a0a0] pt-1 pl-px"><MapCanvas /></div>
      </div>
      <StatusBar />
    </div>
  );
}

/* ---------- attribute table window ---------- */

const N = null;
type Row = [string | null, string, string | null, string];
const rows: Row[] = [
  ["牡鹿郡", "女川町", N, "04581"], [N, "仙台市", "宮城野区", "04102"], [N, "仙台市", "若林区", "04103"], [N, "仙台市", "太白区", "04104"],
  ["遠田郡", "美里町", N, "04505"], [N, "仙台市", "泉区", "04105"], [N, "岩沼市", N, "04211"], ["遠田郡", "涌谷町", N, "04501"],
  [N, "富谷市", N, "04216"], [N, "登米市", N, "04212"], [N, "栗原市", N, "04213"], [N, "東松島市", N, "04214"],
  ["本吉郡", "南三陸町", N, "04606"], [N, "大崎市", N, "04215"], ["亘理郡", "山元町", N, "04362"], ["加美郡", "色麻町", N, "04444"],
  ["加美郡", "加美町", N, "04445"], ["黒川郡", "大和町", N, "04421"], ["宮城郡", "七ヶ浜町", N, "04404"], ["黒川郡", "大郷町", N, "04422"],
  ["伊具郡", "丸森町", N, "04341"], ["宮城郡", "利府町", N, "04406"], ["黒川郡", "大衡村", N, "04424"],
];
const heads = ["都道府県名", "北海道の振興局名", "郡名", "市区町村名", "政令指定都市の行政区名", "地方公共団体コード"];
const headShift = ["-ml-[13px]", "-ml-[35px]", "", "", "-ml-[97px]", "-ml-[21px]"];

function TableRow({ row, i }: { row: Row; i: number }) {
  const sel = i === 0;
  const cells = ["宮城県", N, ...row];
  return (
    <div className="flex h-16 shrink-0">
      <div className="flex w-[60px] items-center border-t-2 border-r-2 border-b-2 border-l-2 border-t-white border-r-[#696969] border-b-[#696969] border-l-white bg-[#f0f0f0] pb-1 pl-1.5 text-[34px] tracking-[0.4px] shadow-[inset_-2px_-2px_0_#a0a0a0]">{i + 1}</div>
      {cells.map((c, k) => (
        <div key={k} className={`flex w-[200px] items-center border-r-2 border-b-2 border-[#a0a0a0] pb-[9px] pl-[6px] ${sel ? "bg-[#0078d7] text-white" : i % 2 ? "bg-[#e9e7e3]" : "bg-white"} ${i === 1 && k === 0 ? "shadow-[inset_0_0_0_4px_#00ff7f]" : ""}`}>
          {c === N ? <span className={`text-[34px] tracking-[1.5px] italic ${sel ? "" : "text-[#868686]"}`}>NULL</span> : k === 5 ? <span className="text-[34px] tracking-[0.4px]">{c}</span> : c}
        </div>
      ))}
    </div>
  );
}

const Sep = () => <div className="mr-[3px] ml-[7px] h-9 w-[3px] shrink-0 border-l-2 border-[#a0a0a0] bg-white" />;
const S = ({ children }: Kids) => <Cell w="w-[46px]">{children}</Cell>;
const Kana = ({ children }: Kids) => <span className="tracking-[-2.8px] [font-feature-settings:'palt']">{children}</span>;

function TableWindow() {
  return (
    <div className="absolute top-[2px] left-[1352px] flex h-[1724px] w-[1382px] flex-col overflow-hidden rounded-2xl bg-[#f0f0f0] shadow-[0_0_0_1px_#a3a3a3,0_0_72px_rgba(0,0,0,0.42)]">
      <div className="flex h-[60px] shrink-0 items-center bg-[#f3f2f1] pl-4">
        <QLogo size={32} /><span className="ml-[10px] text-[24px] tracking-[-0.7px] whitespace-nowrap">融合<Kana>ポリゴンの</Kana>出力 — 地物数合計: 39, <Kana>フィルタ</Kana>: 39, 選択: 1</span>
        <div className="mr-[36px] ml-auto flex items-center gap-[70px] pb-0.5">
          <svg width="22" height="22"><path d="M1 11h20" stroke="#000" strokeWidth="2" /></svg>
          <svg width="22" height="22"><rect x="1.500" y="1.500" width="19" height="19" rx="2.500" fill="none" stroke="#000" strokeWidth="2" /></svg>
          <svg width="22" height="22"><path d="M1 1l20 20M21 1L1 21" stroke="#000" strokeWidth="2" /></svg>
        </div>
      </div>
      <div className="flex h-[51px] shrink-0 items-center pl-[3px]">
        <S><Pencil /></S><S><EditAll /></S><S><Save /></S><Sep />
        <S><AddRow /></S><S><Trash /></S><S><Cut /></S><S><Copy /></S><S><Paste /></S><Sep />
        <S><SelExpr /></S><S><SelAll /></S><S><Invert /></S><S><DeselSmall /></S><S><Funnel /></S>
        <div className={`flex h-[44px] w-[46px] shrink-0 items-center justify-center border-2 border-t-[#a0a0a0] border-r-white border-b-white border-l-[#a0a0a0] ${CHECKER}`}><MoveTop /></div>
        <S><PanRows /></S><S><ZoomSel size={32} /></S><Sep />
        <S><NewCol color="#cfcba0" /></S><S><NewCol color="#e0b5c0" /></S><S><OrganizeCols /></S><S><Abacus /></S><Sep />
        <S><CondFormat /></S><Sep /><S><ActionIcon /></S><S><DockTable /></S>
      </div>
      <div className={`${SUNKEN} flex min-h-0 flex-1 bg-white p-0.5`}>
        <div className="flex min-w-0 flex-1 flex-col overflow-hidden">
          <div className="flex h-16 shrink-0 bg-[#f0f0f0]">
            <div className="w-[60px]" />
            {heads.map((h, i) => (
              <div key={h} className="w-[200px] border-2 border-t-white border-r-[#696969] border-b-[#696969] border-l-white px-1.5 pb-1 shadow-[inset_-2px_-2px_0_#a0a0a0]">
                <div className="flex h-full items-center">
                  <div className={`flex h-full items-center overflow-hidden whitespace-nowrap ${i === 0 ? "w-[136px] flex-none" : "min-w-0 flex-1"} ${i === 2 || i === 3 ? "justify-center" : ""}`}><span className={headShift[i]}>{h}</span></div>
                  {i === 0 && <svg width="34" height="42" viewBox="0 0 34 42" fill="none" className="ml-2 shrink-0"><path d="M1 41L17 1" stroke="#999" strokeWidth="2" /><path d="M17 1l14 39H1" stroke="#fff" strokeWidth="2" /></svg>}
                </div>
              </div>
            ))}
          </div>
          {rows.map((r, i) => <TableRow key={i} row={r} i={i} />)}
        </div>
        <div className={`flex w-[33px] flex-col ${CHECKER}`}>
          <SbBtn dir="up" className="h-[34px]" />
          <div className={`${RAISED} h-[824px]`} />
          <SbBtn dir="down" className="mt-auto h-[34px]" />
        </div>
        <div className="w-[2px] bg-[#f0f0f0]" />
      </div>
      <div className="flex h-[73px] shrink-0 items-start pt-1.5 pl-[6px]">
        <div className={`${RAISED} flex h-[60px] w-[362px] items-center pb-1 pl-[7px]`}>
          <TableIcon /><span className="ml-[5px] pb-0.5">すべての地物を表示</span>
          <Tri className="mb-[-36px] ml-auto h-[11px] w-[11px]" />
        </div>
        <div className="mt-2 mr-[5px] ml-auto flex items-center gap-[9px]"><FormIcon /><div className={`flex h-[44px] w-[46px] items-center justify-center border-2 border-t-[#a0a0a0] border-r-white border-b-white border-l-[#a0a0a0] ${CHECKER}`}><TableIcon /></div></div>
      </div>
    </div>
  );
}

/* ---------- taskbar ---------- */

const Slot = ({ children, dot }: Kids & { dot?: boolean }) => (
  <div className="relative flex h-full w-[88px] shrink-0 items-center justify-center">
    {children}
    {dot && <div className="absolute bottom-[10px] h-1.5 w-3 rounded-full bg-[#7d7c7b]" />}
  </div>
);

const Gear = () => (
  <Icon>
    <path d="M20 1h8l2 7 5 3 7-3 5 8-5 5v6l5 5-5 8-7-2-5 3-2 6h-8l-2-6-5-3-7 2-5-8 5-5v-6l-5-5 5-8 7 3 5-3z" fill="#707c88" />
    <circle cx="24" cy="24" r="12" fill="#f3f3f3" /><circle cx="24" cy="24" r="8" fill="#0f66b5" />
  </Icon>
);

function Taskbar() {
  return (
    <div className="flex h-[94px] w-full items-center bg-[#dfdedd] pb-0.5 pl-[431px] text-[#1b1b1b]">
      <svg width="46" height="46" viewBox="0 0 46 46"><defs><linearGradient id="wn" x1="0" y1="0" x2="1" y2="1"><stop offset="0" stopColor="#4fd3ff" /><stop offset="1" stopColor="#0067c8" /></linearGradient></defs><path d="M0 0h22v22H0zM24 0h22v22H24zM0 24h22v22H0zM24 24h22v22H24z" fill="url(#wn)" /></svg>
      <div className="ml-[28px] flex h-16 w-[437px] items-center rounded-full border-2 border-[#cfcecd] border-b-[#b9b8b7] bg-[#f5f5f5] pl-5">
        <svg width="30" height="30" viewBox="0 0 30 30" fill="none" stroke="#1b1b1b" strokeWidth="3"><circle cx="13" cy="12" r="10.500" /><path d="M20 20l8 8" strokeWidth="4" strokeLinecap="round" /></svg>
        <span className="ml-[21px] text-[27px] text-[#5d5d5d]">検索</span>
      </div>
      <div className="ml-[6px] flex h-full">
        <Slot>
          <Icon><path d="M1 18c3 1 3-2 4-5 1-4 3-7 6-8 2 4 3 8 2 13l7-12C25 0 38 0 44 4l-3 3c4 5 7 12 6 21-1 11-10 20-23 20S0 39 0 28c0-4 0-7 1-10z" fill="#1467d2" /><path d="M20 10c3-8 14-11 22-4l-2 3c5 7 6 18 0 25L24 14z" fill="#2f8bf0" /><path d="M22 2c4-3 13-3 17 0l-8 1z" fill="#b07cf0" /><circle cx="25" cy="8" r="1.500" fill="#dff" /><path d="M13 19c6-8 20-6 21 5 0 4-5 10-8 13-8-2-15-8-13-18z" fill="#e6f1fd" /><path d="M14 18l9 10 9-10" stroke="#b9d8f8" strokeWidth="2" /><path d="M5 26c2 11 12 16 22 13" stroke="#0a4fae" strokeWidth="3" /></Icon>
        </Slot>
        <Slot dot>
          <Icon><path d="M0 5c0-2 1-3 3-3h12l5 6H0z" fill="#dc9c06" /><path d="M0 10h15l5-4h26c1 0 2 1 2 2v34c0 2-1 3-3 3H3c-2 0-3-1-3-3z" fill="#ffc933" /><path d="M8 45V36c0-3 2-5 5-5h22c3 0 5 2 5 5v9z" fill="#1275c6" /><path d="M15 38h18" stroke="#0b4f93" strokeWidth="2.500" /></Icon>
        </Slot>
        <Slot>
          <Icon><circle cx="24" cy="24" r="23.500" fill="#fbfbfb" /><g strokeWidth="6.500" strokeLinecap="round"><path d="M20 11v0M11 20h9" stroke="#36c5f0" /><path d="M28 11v9M37 20v0" stroke="#2eb67d" /><path d="M28 28h9M28 37v0" stroke="#ecb22e" /><path d="M20 28v9M11 28v0" stroke="#e01e5a" /></g></Icon>
        </Slot>
        <Slot><div className="flex h-12 w-12 items-center justify-center rounded-full bg-[#75aadb] font-['Liberation_Serif',serif] text-[31px] text-white">R</div></Slot>
        <Slot>
          <Icon><path d="M6 3h36v44H6z" fill="#000" /><path d="M4 4h35v41H4z" fill="#fff" stroke="#222" strokeWidth="1.500" /><path d="M5 3h34" stroke="#000" strokeWidth="6" strokeDasharray="2 2" /><rect x="7" y="8" width="9" height="10" rx="2" fill="#f0f" /><rect x="25" y="33" width="11" height="10" rx="3" fill="#0ff" /><path d="M7 21h8M7 26h27M7 30h27M7 34h27M7 38h9M7 42h9M27 12h8" stroke="#999" strokeWidth="1.500" /></Icon>
        </Slot>
        <Slot>
          <Icon><rect y="6" width="48" height="36" rx="2" fill="#383838" /><path d="M0 6h16v6H0z" fill="#ccc" /><path d="M16 6h16v6H16z" fill="#999" /><path d="M32 6h16v6H32z" fill="#666" /><path d="M8 18l9 9-9 9" stroke="#ddd" strokeWidth="4.500" /><rect x="23" y="32" width="17" height="5" fill="#f3f3f3" /></Icon>
        </Slot>
        <Slot>
          <Icon><path d="M1 17l5-4 30 27-1 8L1 20z" fill="#0a6fb8" /><path d="M1 31l5 4L36 8 35 0 1 28z" fill="#1187d0" /><path d="M35 0l13 6v36l-13 6z" fill="#29a4f2" /></Icon>
        </Slot>
        <Slot>
          <div className="absolute top-[6px] left-[15px] h-[78px] w-[72px] rounded-lg border-2 border-[#cfcecd] bg-[#ebeaea]" />
          <div className="absolute top-[6px] left-[9px] flex h-[78px] w-[72px] items-center justify-center rounded-lg border-2 border-[#d3d2d1] bg-[#f1f0f0]"><QLogo size={46} /></div>
          <div className="absolute bottom-[10px] left-[28px] h-1.5 w-8 rounded-full bg-[#5f7685]" />
        </Slot>
        <Slot>
          <Icon><path d="M4 14l5-8 4 7 4-3c1-2 9 0 9 0l6-9 3 8c8 6 12 12 10 20-2 11-11 18-22 18S2 40 3 27z" fill="#ff7a1a" /><path d="M32 1c8 7 15 14 14 26-1 6-5 10-9 13 5-10 2-18-5-25-3-4-3-9 0-14z" fill="#ffd43b" /><path d="M3 27c1 12 10 20 21 20 8 0 14-3 18-9-8 4-18 5-25-1z" fill="#f5156c" /><circle cx="25" cy="25" r="9.500" fill="#7a45e0" /><path d="M8 16c6-3 10-2 12 1l6 1c-2 4-7 3-8 7 0 4 4 6 8 6-7 4-16 0-18-7z" fill="#ff9a1f" /></Icon>
        </Slot>
        <Slot>
          <Icon><g transform="rotate(45 24 24)"><rect x="8" y="8" width="15" height="15" rx="1" fill="#ff8080" /><rect x="25" y="8" width="15" height="15" rx="1" fill="#90d060" /><rect x="8" y="25" width="15" height="15" rx="1" fill="#80b0ff" /><rect x="25" y="25" width="15" height="15" rx="1" fill="#ffe480" /></g><path d="M22 9l2 28M24 18l10 7" stroke="#dfdedd" strokeWidth="2.500" /><circle cx="24" cy="34" r="3.500" fill="#f3eed9" /><circle cx="34" cy="25" r="3.500" fill="#f3eed9" /><circle cx="24" cy="17" r="3.500" fill="#f3eed9" /></Icon>
        </Slot>
        <Slot dot><Gear /></Slot>
        <Slot dot>
          <Icon className="-mt-1"><path d="M4 38C4 20 16 9 42 8L14 16 9 38z" fill="#333" /><path d="M16 14c8-5 20-5 28-5v30H8c0-10 2-19 8-25z" fill="#ffe600" stroke="#c9b400" /><text x="27" y="34" textAnchor="middle" fontFamily="Liberation Sans" fontWeight="700" fontSize="19" stroke="#111" fill="#111" textLength="31" lengthAdjust="spacingAndGlyphs">PDF</text></Icon>
        </Slot>
      </div>
      <div className="ml-auto flex h-full items-center pr-[40px]">
        <svg width="22" height="16" viewBox="0 0 22 16" fill="none"><path d="M1 14L11 2l10 12" stroke="#111" strokeWidth="2.400" /></svg>
        <svg width="34" height="32" viewBox="0 0 34 32" className="mt-1 ml-[37px]"><path d="M8 0l8 5-8 5-8-5zM24 0l8 5-8 5-8-5zM24 10l8 5-8 5-8-5zM16 16l8 6-4 4z" fill="#000" /><rect y="13" width="18" height="18" rx="4" fill="#d0021b" /><text x="9" y="28" textAnchor="middle" fontFamily="Noto Sans" fontWeight="700" fontSize="15" fill="#fff">9</text></svg>
        <svg width="24" height="32" viewBox="0 0 24 32" fill="none" className="ml-[34px]" stroke="#111" strokeWidth="2"><path d="M1 32L12 1l11 31M5 21h14" /></svg>
        <svg width="34" height="34" viewBox="0 0 34 34" fill="none" className="ml-[47px]" stroke="#111" strokeWidth="2.200"><circle cx="17" cy="17" r="15" /><path d="M22 6v13c0 8-10 8-11 1" /></svg>
        <svg width="34" height="26" viewBox="0 0 34 26" fill="none" className="ml-[42px]" stroke="#111" strokeWidth="2.300"><path d="M2 10c8-9 22-9 30 0M6.500 14.500c6-6.500 15-6.500 21 0M11 19c4-4 8-4 12 0" /><circle cx="17" cy="22.500" r="2.500" fill="#111" stroke="none" /></svg>
        <svg width="34" height="28" viewBox="0 0 34 28" fill="none" className="ml-[14px]" stroke="#111" strokeWidth="2.200"><path d="M2 9h5l7-7v24l-7-7H2zM18 9c3 3 3 7 0 10M23 5c5 5 5 13 0 18M27 2c7 7 7 17 0 24" /></svg>
        <svg width="34" height="30" viewBox="0 0 34 30" fill="none" className="ml-[13px]"><rect x="2" y="8" width="27" height="19" rx="4" stroke="#111" strokeWidth="2.400" /><rect x="5" y="11" width="21" height="13" rx="1.500" fill="#111" /><path d="M30 13h3v9h-3z" fill="#111" /><path d="M8 0L2 11h5l-2 9 8-12H8z" fill="#111" stroke="#dfdedd" /></svg>
        <div className="ml-[25px] flex w-[130px] flex-col items-end text-[24px] leading-[32px] tracking-[-0.8px] whitespace-nowrap"><span>12:16</span><span>2025/09/24</span></div>
      </div>
    </div>
  );
}

export default function App() {
  return (
    <div className="h-[1824px] w-[2736px] overflow-hidden bg-[#4a4846] font-['Noto_Sans','Noto_Sans_CJK_JP',sans-serif] text-[32px] leading-none text-black">
      <div className="relative h-[1730px] overflow-hidden border-b-2 border-[#a9a8a6]"><MainWindow /><TableWindow /></div>
      <Taskbar />
    </div>
  );
}
